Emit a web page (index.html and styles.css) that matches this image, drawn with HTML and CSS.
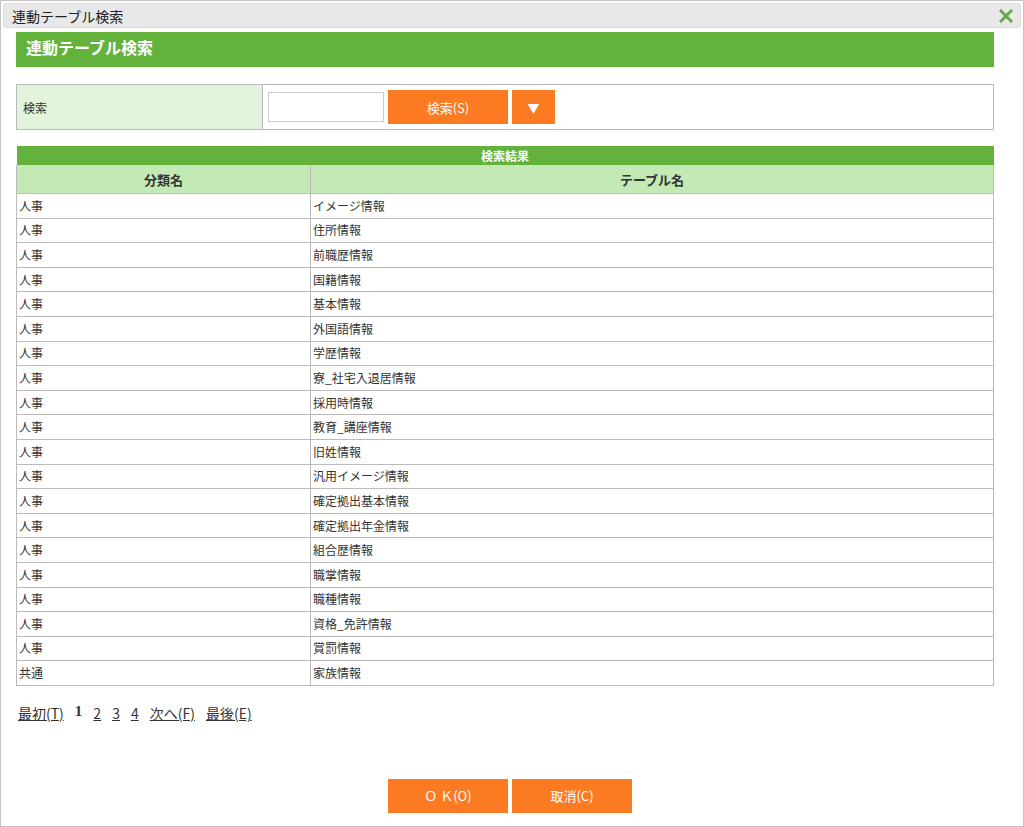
FILE: index.html
```html
<!DOCTYPE html>
<html lang="ja">
<head>
    <meta charset="UTF-8">
    <title>連動テーブル検索</title>
    <link rel="stylesheet" href="styles.css">
</head>
<body>
    <div class="dialog">
        <div class="titlebar">
            <span class="titlebar-text">連動テーブル検索</span>
            <svg class="close" width="14" height="14" viewBox="0 0 14 14">
                <path d="M2 2 L12 12 M12 2 L2 12" stroke="#6aa84f" stroke-width="3" stroke-linecap="square"/>
            </svg>
        </div>

        <div class="content">
            <div class="page-title">連動テーブル検索</div>

            <table class="search-table">
                <tr>
                    <td class="search-label">検索</td>
                    <td class="search-field">
                        <div class="search-row">
                            <input type="text" class="search-input">
                            <button class="btn btn-search">検索(S)</button>
                            <button class="btn btn-drop">▼</button>
                        </div>
                    </td>
                </tr>
            </table>

            <table class="result-table">
                <tr><th colspan="2" class="result-caption">検索結果</th></tr>
                <tr class="col-head">
                    <th class="col-kind">分類名</th>
                    <th>テーブル名</th>
                </tr>
                <tr><td>人事</td><td>イメージ情報</td></tr>
                <tr><td>人事</td><td>住所情報</td></tr>
                <tr><td>人事</td><td>前職歴情報</td></tr>
                <tr><td>人事</td><td>国籍情報</td></tr>
                <tr><td>人事</td><td>基本情報</td></tr>
                <tr><td>人事</td><td>外国語情報</td></tr>
                <tr><td>人事</td><td>学歴情報</td></tr>
                <tr><td>人事</td><td>寮_社宅入退居情報</td></tr>
                <tr><td>人事</td><td>採用時情報</td></tr>
                <tr><td>人事</td><td>教育_講座情報</td></tr>
                <tr><td>人事</td><td>旧姓情報</td></tr>
                <tr><td>人事</td><td>汎用イメージ情報</td></tr>
                <tr><td>人事</td><td>確定拠出基本情報</td></tr>
                <tr><td>人事</td><td>確定拠出年金情報</td></tr>
                <tr><td>人事</td><td>組合歴情報</td></tr>
                <tr><td>人事</td><td>職掌情報</td></tr>
                <tr><td>人事</td><td>職種情報</td></tr>
                <tr><td>人事</td><td>資格_免許情報</td></tr>
                <tr><td>人事</td><td>賞罰情報</td></tr>
                <tr><td>共通</td><td>家族情報</td></tr>
            </table>

            <div class="pager">
                <a href="#">最初(T)</a>
                <b>1</b>
                <a href="#">2</a>
                <a href="#">3</a>
                <a href="#">4</a>
                <a href="#">次へ(F)</a>
                <a href="#">最後(E)</a>
            </div>

            <div class="footer-buttons">
                <button class="btn btn-foot">Ｏ Ｋ(O)</button>
                <button class="btn btn-foot">取消(C)</button>
            </div>
        </div>
    </div>
</body>
</html>
```

FILE: styles.css
```css
body {
    margin: 0;
    font-family: "Noto Sans CJK JP", "Noto Sans", sans-serif;
    color: #333;
    background: #fff;
}

.dialog {
    width: 1024px;
    height: 827px;
    box-sizing: border-box;
    border: 1px solid #c4c4c4;
    padding: 2px;
    display: flex;
    flex-direction: column;
}

.titlebar {
    height: 25px;
    box-sizing: border-box;
    background: #e8e8e8;
    border: 1px solid #dcdcdc;
    border-radius: 3px;
    display: flex;
    align-items: center;
    justify-content: space-between;
    padding: 0 7px 0 8px;
}

.titlebar-text {
    font-size: 14px;
    color: #222;
}

.content {
    padding: 4px 27px 0 13px;
    display: flex;
    flex-direction: column;
    flex: 1;
}

.page-title {
    background: #62b23c;
    color: #fff;
    font-size: 16px;
    font-weight: bold;
    height: 35px;
    line-height: 30px;
    padding-left: 10px;
}

.search-table {
    margin-top: 17px;
    width: 100%;
    border-collapse: collapse;
    border: 1px solid #bbb;
    font-size: 12px;
}

.search-label {
    width: 233px;
    background: #e2f4dc;
    border-right: 1px solid #bbb;
    padding: 0 6px;
    height: 44px;
    vertical-align: middle;
}

.search-field {
    padding: 0 5px;
    height: 44px;
}

.search-row {
    display: flex;
    align-items: center;
}

.search-input {
    width: 116px;
    height: 30px;
    box-sizing: border-box;
    border: 1px solid #ccc;
    margin: 0 4px 0 0;
}

.btn {
    background: #fb7a22;
    color: #fff;
    border: none;
    font-family: inherit;
    cursor: pointer;
    height: 34px;
    padding: 0;
}

.btn-search {
    width: 120px;
    font-size: 13px;
    margin-right: 4px;
}

.btn-drop {
    width: 43px;
    font-size: 12px;
}

.result-table {
    margin-top: 16px;
    width: 100%;
    border-collapse: collapse;
    font-size: 12px;
}

.result-caption {
    background: #62b23c;
    color: #fff;
    font-size: 12px;
    height: 19px;
    padding: 0;
    border: none;
}

.col-head th {
    background: #c3eab5;
    border: 1px solid #bbb;
    border-top: none;
    height: 28px;
    padding: 0;
    font-weight: bold;
    font-size: 13px;
    color: #333;
}

.col-head .col-kind {
    width: 293px;
}

.result-table td {
    border: 1px solid #bbb;
    height: 23.6px;
    padding: 0 2px;
    line-height: 14px;
}

.pager {
    margin-top: 17px;
    padding-left: 2px;
    font-size: 14px;
    display: flex;
    gap: 11px;
}

.pager a {
    color: #333;
}

.pager b {
    font-family: "Liberation Serif", serif;
    font-size: 15px;
}

.footer-buttons {
    margin-top: 56px;
    display: flex;
    justify-content: center;
    gap: 4px;
    padding-left: 10px;
}

.btn-foot {
    width: 120px;
    font-size: 13px;
}
```
